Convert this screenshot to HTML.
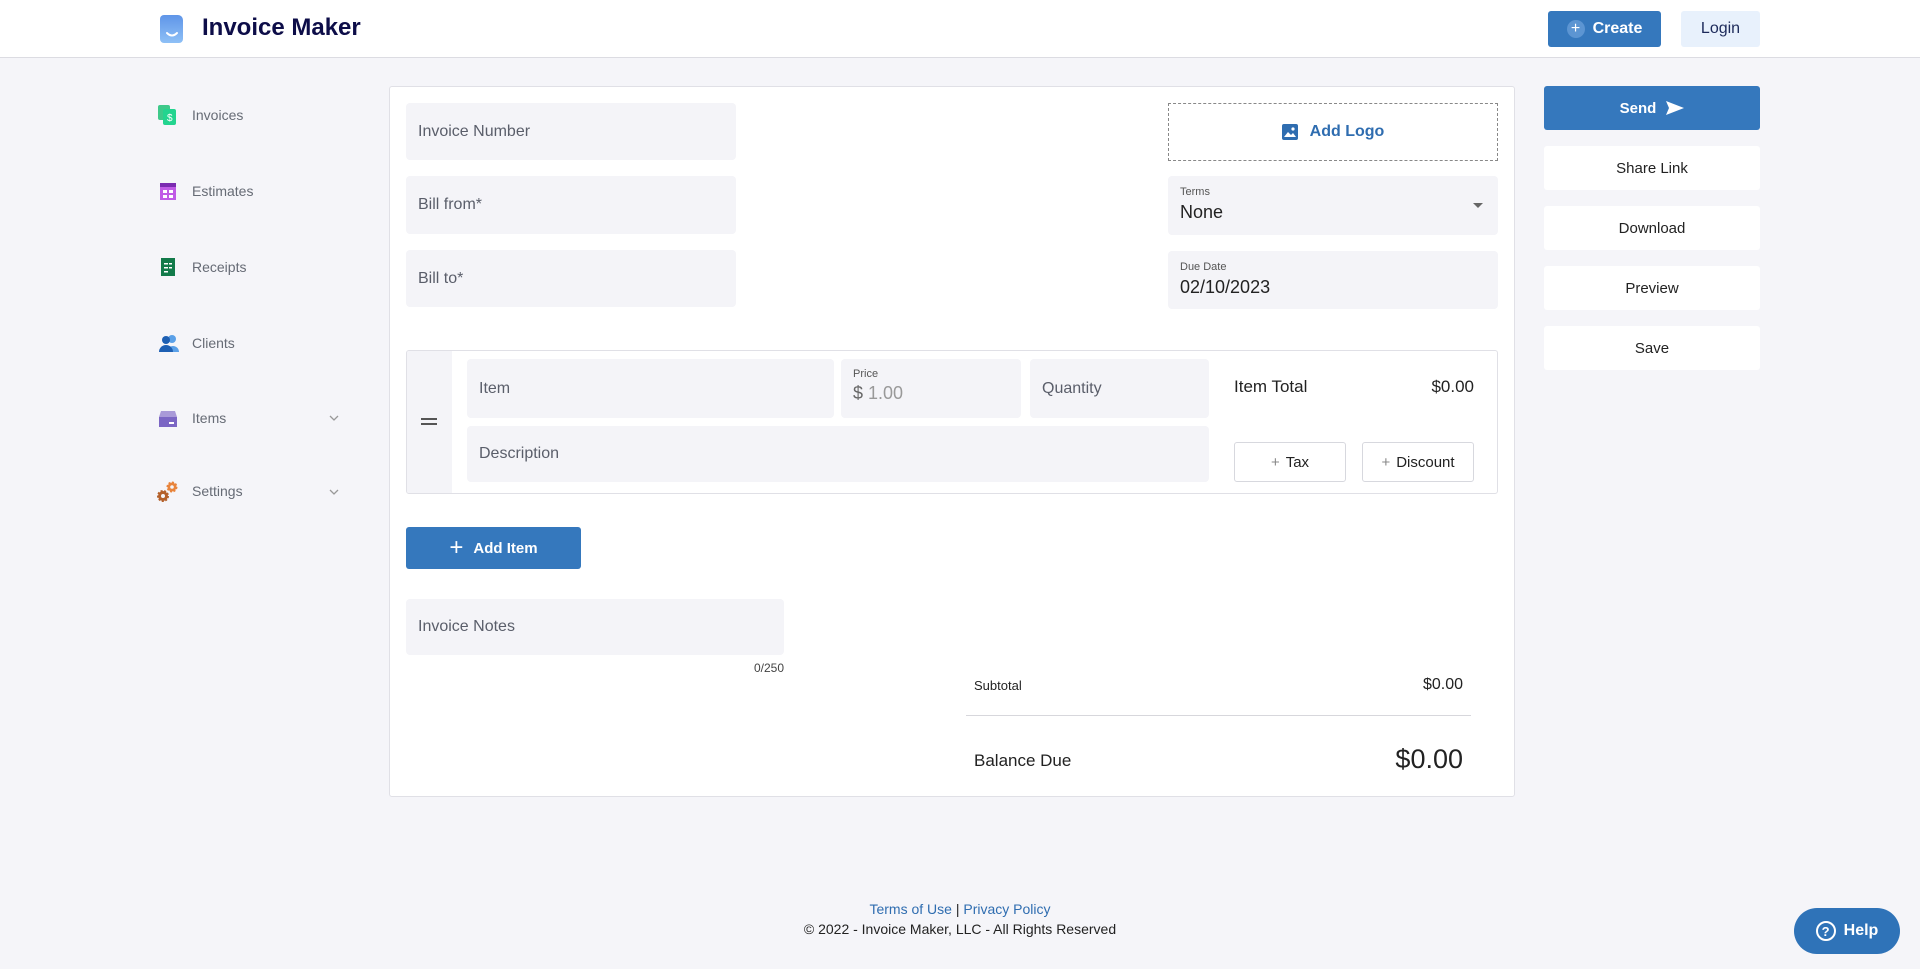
<!DOCTYPE html>
<html><head><meta charset="utf-8"><style>
*{box-sizing:border-box;margin:0;padding:0}
body{width:1920px;height:969px;background:#f5f5f9;font-family:"Liberation Sans",sans-serif;position:relative;overflow:hidden;color:#222}
.a{position:absolute}
.hdr{left:0;top:0;width:1920px;height:58px;background:#fff;border-bottom:1px solid #dcdce2}
.fld{background:#f4f4f8;border-radius:4px;color:#5a5e6a;font-size:16px;padding-left:12px;display:flex;align-items:center}
.nav{left:192px;font-size:14px;color:#666b75}
.rb{left:1544px;width:216px;height:44px;background:#fff;border-radius:3px;display:flex;align-items:center;justify-content:center;font-size:15px;color:#222}
.sm{font-size:11px;color:#555}
.btn{background:#fff;border:1px solid #d7d8de;border-radius:3px;display:flex;align-items:center;justify-content:center;font-size:15px;color:#222}
.chev{left:329px}
</style></head><body>
<div class="a hdr"></div>
<svg class="a" style="left:159px;top:15px" width="26" height="28" viewBox="0 0 26 28"><defs><linearGradient id="g" x1="0" y1="0" x2="0" y2="1"><stop offset="0" stop-color="#5f95e8"/><stop offset="1" stop-color="#8ec0f6"/></linearGradient></defs><path d="M5 0h14a5 5 0 0 1 5 5v19a4 4 0 0 1-4 4H5a4 4 0 0 1-4-4V4a4 4 0 0 1 4-4z" fill="url(#g)"/><path d="M8 18q5 5 10 0" stroke="#fff" stroke-width="2" fill="none" stroke-linecap="round"/></svg>
<div class="a" style="left:202px;top:14px;font-size:24px;font-weight:bold;color:#0d0d48">Invoice Maker</div>
<div class="a" style="left:1548px;top:11px;width:113px;height:36px;background:#3578bd;border-radius:3px;color:#fff;font-weight:bold;font-size:16px;display:flex;align-items:center;justify-content:center;gap:8px"><span style="width:18px;height:18px;border-radius:50%;background:#5c95d2;display:inline-flex;align-items:center;justify-content:center;font-size:16px;font-weight:normal">+</span>Create</div>
<div class="a" style="left:1681px;top:11px;width:79px;height:36px;background:#e8f1fc;border-radius:3px;color:#1d2a5a;font-size:16px;display:flex;align-items:center;justify-content:center">Login</div>

<!-- sidebar -->
<svg class="a" style="left:158px;top:105px" width="20" height="20" viewBox="0 0 20 20"><rect x="0" y="0" width="12" height="15" rx="2" fill="#3ec98a"/><rect x="5" y="4" width="13" height="16" rx="2" fill="#23d48f"/><text x="9" y="16" font-size="10" fill="#fff" font-family="Liberation Sans">$</text></svg>
<div class="a nav" style="top:107px">Invoices</div>
<svg class="a" style="left:160px;top:183px" width="16" height="18"><rect width="16" height="4" fill="#7a2bb0"/><rect y="4" width="16" height="13" fill="#c05be6"/><rect x="3" y="7" width="4" height="3" fill="#fff"/><rect x="9" y="7" width="4" height="3" fill="#fff"/><rect x="3" y="12" width="4" height="3" fill="#fff"/><rect x="9" y="12" width="4" height="3" fill="#fff"/></svg>
<div class="a nav" style="top:183px">Estimates</div>
<svg class="a" style="left:161px;top:258px" width="14" height="18"><rect width="14" height="18" fill="#127a4a"/><rect x="3" y="5" width="4" height="1.5" fill="#fff"/><rect x="8" y="5" width="3" height="1.5" fill="#fff"/><rect x="3" y="9" width="4" height="1.5" fill="#fff"/><rect x="8" y="9" width="3" height="1.5" fill="#fff"/><rect x="3" y="13" width="4" height="1.5" fill="#fff"/></svg>
<div class="a nav" style="top:259px">Receipts</div>
<svg class="a" style="left:159px;top:334px" width="20" height="18"><circle cx="13" cy="5" r="4" fill="#5aa0e8"/><path d="M8 18a6 6 0 0 1 12 0z" fill="#5aa0e8"/><circle cx="7" cy="6" r="4" fill="#1d5fb3"/><path d="M0 18a7 7 0 0 1 14 0z" fill="#1d5fb3"/></svg>
<div class="a nav" style="top:335px">Clients</div>
<svg class="a" style="left:159px;top:410px" width="18" height="18"><path d="M2 1h14l2 6H0z" fill="#a99ad8"/><rect y="7" width="18" height="10" fill="#7b66c4"/><rect x="10" y="12" width="5" height="2" fill="#fff"/></svg>
<div class="a nav" style="top:410px">Items</div>
<svg class="a chev" style="top:415px" width="10" height="6"><path d="M1 1l4 4 4-4" stroke="#999" stroke-width="1.3" fill="none"/></svg>
<svg class="a" style="left:156px;top:481px" width="22" height="22" viewBox="0 0 22 22"><circle cx="7" cy="15" r="5" fill="#b4602a" stroke="#b4602a" stroke-width="2" stroke-dasharray="2 1.5"/><circle cx="7" cy="15" r="2" fill="#f5f5f9"/><circle cx="16" cy="6" r="4.5" fill="#e8843c" stroke="#e8843c" stroke-width="2" stroke-dasharray="2 1.5"/><circle cx="16" cy="6" r="1.8" fill="#f5f5f9"/></svg>
<div class="a nav" style="top:483px">Settings</div>
<svg class="a chev" style="top:489px" width="10" height="6"><path d="M1 1l4 4 4-4" stroke="#999" stroke-width="1.3" fill="none"/></svg>

<!-- main card -->
<div class="a" style="left:389px;top:86px;width:1126px;height:711px;background:#fff;border:1px solid #e0e0e6;border-radius:3px"></div>
<div class="a fld" style="left:406px;top:103px;width:330px;height:57px">Invoice Number</div>
<div class="a fld" style="left:406px;top:176px;width:330px;height:58px">Bill from*</div>
<div class="a fld" style="left:406px;top:250px;width:330px;height:57px">Bill to*</div>
<div class="a" style="left:1168px;top:103px;width:330px;height:58px;border:1px dashed #888;display:flex;align-items:center;justify-content:center;gap:12px;color:#2f6db0;font-size:16px;font-weight:bold"><svg width="16" height="16"><rect width="16" height="16" rx="2" fill="#2f6db0"/><path d="M2 13l4-5 3 3 2-2 3 4z" fill="#fff"/><circle cx="11" cy="5" r="1.6" fill="#fff"/></svg>Add Logo</div>
<div class="a fld" style="left:1168px;top:176px;width:330px;height:59px;display:block;padding-top:10px"><div class="sm">Terms</div><div style="font-size:18px;color:#222;margin-top:4px">None</div></div>
<div class="a" style="left:1473px;top:203px;width:0;height:0;border-left:5px solid transparent;border-right:5px solid transparent;border-top:5px solid #666"></div>
<div class="a fld" style="left:1168px;top:251px;width:330px;height:58px;display:block;padding-top:10px"><div class="sm">Due Date</div><div style="font-size:18px;color:#222;margin-top:4px">02/10/2023</div></div>

<div class="a" style="left:406px;top:350px;width:1092px;height:144px;border:1px solid #e0e0e6;border-radius:3px;overflow:hidden"><div style="width:45px;height:100%;background:#f4f4f8"></div></div>
<div class="a" style="left:421px;top:418px;width:16px;height:2px;background:#555"></div>
<div class="a" style="left:421px;top:423px;width:16px;height:2px;background:#555"></div>
<div class="a fld" style="left:467px;top:359px;width:367px;height:59px">Item</div>
<div class="a fld" style="left:841px;top:359px;width:180px;height:59px;display:block;padding-top:9px"><div class="sm">Price</div><div style="font-size:18px;color:#999;margin-top:3px"><span style="color:#666">$</span> 1.00</div></div>
<div class="a fld" style="left:1030px;top:359px;width:179px;height:59px">Quantity</div>
<div class="a fld" style="left:467px;top:426px;width:742px;height:56px">Description</div>
<div class="a" style="left:1234px;top:377px;font-size:17px;color:#222">Item Total</div>
<div class="a" style="left:1400px;top:377px;width:74px;text-align:right;font-size:17px;color:#222">$0.00</div>
<div class="a btn" style="left:1234px;top:442px;width:112px;height:40px"><span style="color:#888;margin-right:6px">+</span>Tax</div>
<div class="a btn" style="left:1362px;top:442px;width:112px;height:40px"><span style="color:#888;margin-right:6px">+</span>Discount</div>

<div class="a" style="left:406px;top:527px;width:175px;height:42px;background:#3578bd;border-radius:3px;color:#fff;font-weight:bold;font-size:15px;display:flex;align-items:center;justify-content:center;gap:10px"><span style="font-size:24px;font-weight:normal;line-height:1">+</span>Add Item</div>
<div class="a fld" style="left:406px;top:599px;width:378px;height:56px">Invoice Notes</div>
<div class="a" style="left:700px;top:661px;width:84px;text-align:right;font-size:12px;color:#444">0/250</div>
<div class="a" style="left:974px;top:678px;font-size:13px;color:#222">Subtotal</div>
<div class="a" style="left:1380px;top:676px;width:83px;text-align:right;font-size:16px;color:#222">$0.00</div>
<div class="a" style="left:966px;top:715px;width:505px;height:1px;background:#d7d7dc"></div>
<div class="a" style="left:974px;top:751px;font-size:17px;color:#222">Balance Due</div>
<div class="a" style="left:1340px;top:744px;width:123px;text-align:right;font-size:27px;color:#222">$0.00</div>

<!-- right column -->
<div class="a rb" style="top:86px;background:#3578bd;color:#fff;font-weight:bold;gap:10px">Send <svg width="18" height="14"><path d="M0 0l18 7-18 7 3-7z" fill="#fff"/></svg></div>
<div class="a rb" style="top:146px">Share Link</div>
<div class="a rb" style="top:206px">Download</div>
<div class="a rb" style="top:266px">Preview</div>
<div class="a rb" style="top:326px">Save</div>

<!-- footer -->
<div class="a" style="left:0;width:1920px;top:901px;text-align:center;font-size:14px;color:#2f6db0">Terms of Use <span style="color:#222">|</span> Privacy Policy</div>
<div class="a" style="left:0;width:1920px;top:921px;text-align:center;font-size:14px;color:#222">© 2022 - Invoice Maker, LLC - All Rights Reserved</div>
<div class="a" style="left:1794px;top:908px;width:106px;height:46px;border-radius:23px;background:#2f73b8;color:#fff;font-weight:bold;font-size:16px;display:flex;align-items:center;justify-content:center;gap:8px"><span style="width:20px;height:20px;border:2px solid #fff;border-radius:50%;display:inline-flex;align-items:center;justify-content:center;font-size:13px">?</span>Help</div>
</body></html>
